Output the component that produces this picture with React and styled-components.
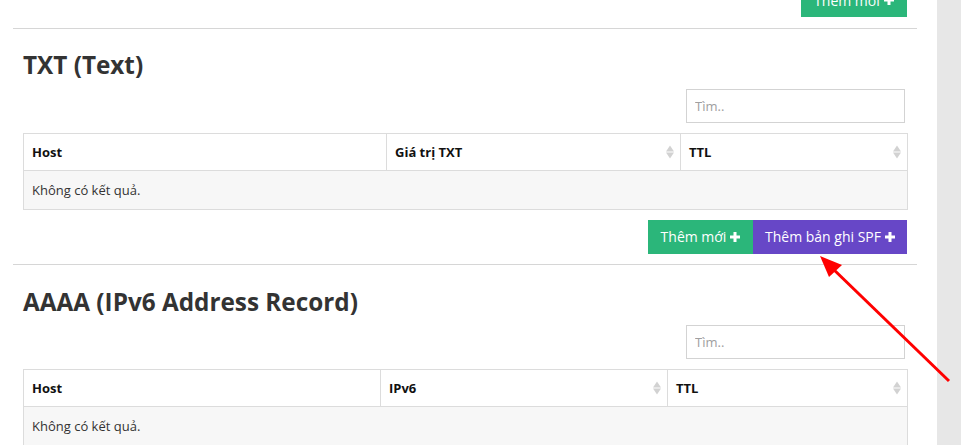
import React from "react";
import styled, { createGlobalStyle } from "styled-components";

const Global = createGlobalStyle`
  html, body { margin: 0; padding: 0; background: #fff; }
  body { font-family: "Open Sans", "Liberation Sans", sans-serif; font-size: 13px; color: #333; overflow: hidden; }
  * { box-sizing: border-box; }
`;

const Page = styled.div`
  position: relative;
  display: flex;
  width: 961px;
  height: 445px;
  overflow: hidden;
`;

const Main = styled.div`
  width: 937px;
  padding: 0 20px 0 13px;
  background: #fff;
`;

const Side = styled.div`
  flex: 1;
  background: #e7e7e7;
`;

const Section = styled.section`
  padding: 0 10px;
`;

const Rule = styled.hr`
  margin: ${(p) => p.$mt}px 0 0;
  border: 0;
  border-top: 1px solid #d6d6d6;
  height: 0;
`;

const Title = styled.h3`
  margin: ${(p) => p.$mt}px 0 0;
  font-size: 24.3px;
  line-height: 1.1;
  font-weight: 700;
  color: #333;
`;

const SearchRow = styled.div`
  display: flex;
  justify-content: flex-end;
  margin-top: 10px;
  padding-right: 2px;
`;

const Search = styled.input`
  width: 219px;
  height: 34px;
  border: 1px solid #d3d3d3;
  padding: 0 8px;
  font-family: inherit;
  font-size: 13px;
  color: #555;
  outline: none;
  &::placeholder { color: #a0a0a0; }
`;

const Table = styled.table`
  margin-top: 10px;
  width: 884px;
  border-collapse: collapse;
  table-layout: fixed;
  border: 1px solid #dcdcdc;
`;

const Th = styled.th`
  position: relative;
  width: ${(p) => p.$w}px;
  height: 37px;
  padding: 0 8px;
  text-align: left;
  font-size: 13px;
  font-weight: 700;
  color: #111;
  border: 1px solid #dcdcdc;
  background: #fff;
`;

const Td = styled.td`
  height: 39px;
  padding: 0 8px;
  background: #f7f7f7;
  font-size: 13px;
  color: #333;
  border: 1px solid #dcdcdc;
`;

const SortIcon = styled.span`
  position: absolute;
  right: 6px;
  top: 50%;
  transform: translateY(-50%);
  display: flex;
  flex-direction: column;
  gap: 1px;
  & > i {
    display: block;
    width: 0;
    height: 0;
    border-left: 4px solid transparent;
    border-right: 4px solid transparent;
  }
  & > i:first-child { border-bottom: 6px solid #d2d2d2; }
  & > i:last-child { border-top: 6px solid #d2d2d2; }
`;

const BtnRow = styled.div`
  display: flex;
  justify-content: flex-end;
  margin-top: ${(p) => p.$mt}px;
`;

const Btn = styled.button`
  height: 34px;
  padding: 0;
  border: 0;
  display: inline-flex;
  align-items: center;
  justify-content: center;
  gap: 4px;
  font-family: inherit;
  font-size: 14px;
  color: #fff;
  background: ${(p) => (p.$purple ? "#6747c7" : "#2bb67a")};
  width: ${(p) => p.$w}px;
`;

const Arrow = styled.svg`
  position: absolute;
  left: 0;
  top: 0;
  pointer-events: none;
`;

const Plus = () => (
  <svg width="10" height="10" viewBox="0 0 10 10">
    <path d="M3.5 0h3v3.5H10v3H6.5V10h-3V6.5H0v-3h3.5z" fill="#fff" />
  </svg>
);

const Sort = () => (
  <SortIcon>
    <i />
    <i />
  </SortIcon>
);

function DataTable({ cols }) {
  return (
    <Table>
      <thead>
        <tr>
          {cols.map((c, i) => (
            <Th key={c.name} $w={c.w}>
              {c.name}
              {i > 0 && <Sort />}
            </Th>
          ))}
        </tr>
      </thead>
      <tbody>
        <tr>
          <Td colSpan={cols.length}>Không có kết quả.</Td>
        </tr>
      </tbody>
    </Table>
  );
}

export default function App() {
  return (
    <>
      <Global />
      <Page>
        <Main>
          <Section>
            <BtnRow $mt={-17}>
              <Btn $w={106}>Thêm mới <Plus /></Btn>
            </BtnRow>
          </Section>
          <Rule $mt={11} />
          <Section>
            <Title $mt={23}>TXT (Text)</Title>
            <SearchRow>
              <Search placeholder="Tìm.." />
            </SearchRow>
            <DataTable
              cols={[
                { name: "Host", w: 363 },
                { name: "Giá trị TXT", w: 294 },
                { name: "TTL", w: 227 },
              ]}
            />
            <BtnRow $mt={10}>
              <Btn $w={105}>Thêm mới <Plus /></Btn>
              <Btn $purple $w={154}>Thêm bản ghi SPF <Plus /></Btn>
            </BtnRow>
          </Section>
          <Rule $mt={10} />
          <Section>
            <Title $mt={24}>AAAA (IPv6 Address Record)</Title>
            <SearchRow>
              <Search placeholder="Tìm.." />
            </SearchRow>
            <DataTable
              cols={[
                { name: "Host", w: 357 },
                { name: "IPv6", w: 287 },
                { name: "TTL", w: 240 },
              ]}
            />
          </Section>
        </Main>
        <Side />
        <Arrow width="961" height="445" viewBox="0 0 961 445">
          <line x1="949" y1="381" x2="830" y2="266" stroke="#f00" strokeWidth="3" />
          <polygon points="820,256 842,265 829,277" fill="#f00" />
        </Arrow>
      </Page>
    </>
  );
}
